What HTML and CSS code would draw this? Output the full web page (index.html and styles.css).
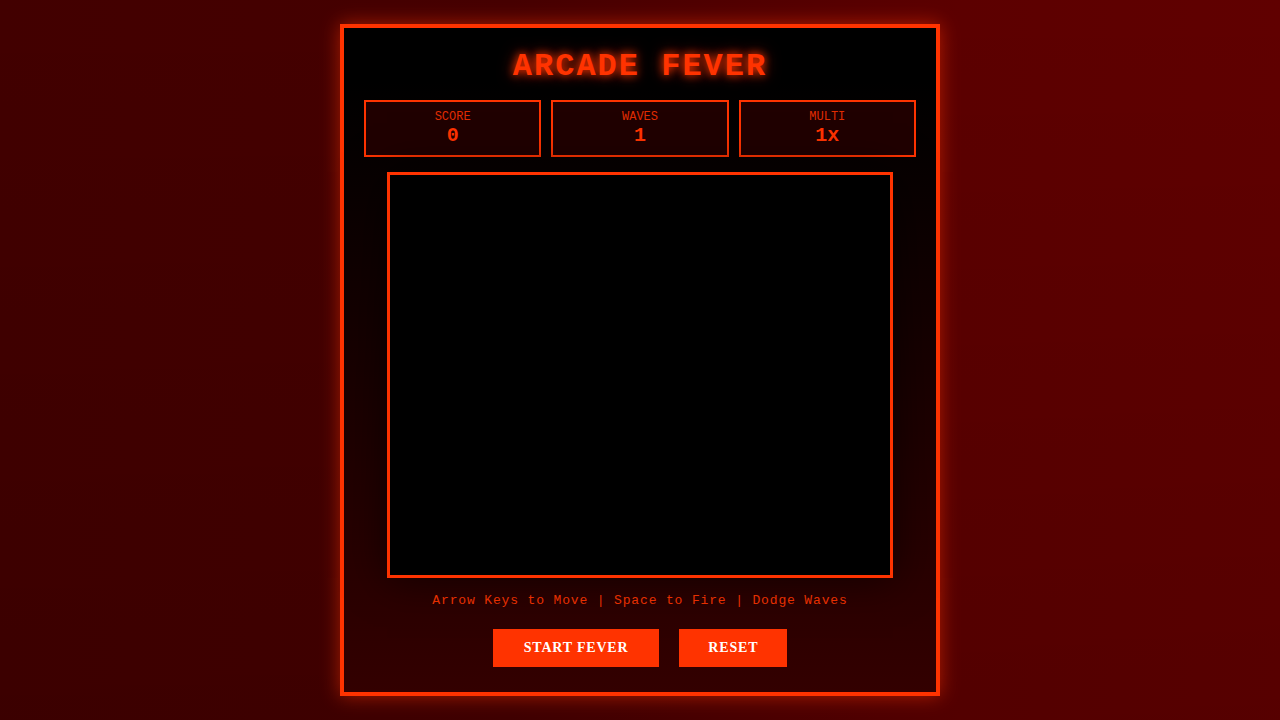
FILE: index.html
```html
<!DOCTYPE html>
<html lang="en">
<head>
<meta charset="utf-8">
<title>Arcade Fever</title>
<link rel="stylesheet" href="styles.css">
</head>
<body>
<div class="cabinet">
  <h1 class="title">ARCADE FEVER</h1>
  <div class="stats">
    <div class="stat"><div class="stat-label">SCORE</div><div class="stat-value">0</div></div>
    <div class="stat"><div class="stat-label">WAVES</div><div class="stat-value">1</div></div>
    <div class="stat"><div class="stat-label">MULTI</div><div class="stat-value">1x</div></div>
  </div>
  <div class="screen"></div>
  <p class="help">Arrow Keys to Move | Space to Fire | Dodge Waves</p>
  <div class="controls">
    <button class="btn btn-start">START FEVER</button>
    <button class="btn btn-reset">RESET</button>
  </div>
</div>
</body>
</html>
```

FILE: styles.css
```css
html, body {
  margin: 0;
  padding: 0;
  height: 100%;
}
body {
  background:
    linear-gradient(to bottom, rgba(0,0,0,0) 0%, rgba(0,0,0,0.1) 100%),
    linear-gradient(to right, #420000 0%, #460000 40%, #5c0000 75%, #600000 100%);
  display: flex;
  align-items: center;
  justify-content: center;
  font-family: "Liberation Mono", "Courier New", monospace;
  color: #ff3300;
}
.cabinet {
  width: 552px;
  height: 620px;
  padding: 20px 20px 24px;
  border: 4px solid #ff3300;
  background: linear-gradient(to bottom, #000 8%, #330000 100%);
  box-shadow: 0 0 18px rgba(255, 51, 0, 0.55);
  display: flex;
  flex-direction: column;
  align-items: center;
}
.title {
  margin: 0 0 14px;
  font-size: 32px;
  line-height: 38px;
  font-weight: bold;
  letter-spacing: 2px;
  color: #ff3300;
  text-shadow: 0 0 8px #ff3300, 0 0 16px rgba(255, 51, 0, 0.6);
}
.stats {
  width: 552px;
  display: grid;
  grid-template-columns: repeat(3, 1fr);
  gap: 10px;
}
.stat {
  border: 2px solid #ff3300;
  background: #200000;
  padding: 9px 0 7px;
  text-align: center;
}
.stat-label {
  font-size: 12px;
  line-height: 13px;
  color: #e02d00;
}
.stat-value {
  font-size: 20px;
  line-height: 24px;
  font-weight: bold;
  color: #ff3300;
}
.screen {
  margin-top: 15px;
  width: 500px;
  height: 400px;
  border: 3px solid #ff3300;
  background: #000;
  box-shadow: 0 0 40px rgba(0, 0, 0, 0.6);
}
.help {
  margin: 14px 0 0;
  font-size: 13px;
  line-height: 18px;
  letter-spacing: 0.85px;
  color: #e63000;
}
.controls {
  margin-top: 19px;
  display: flex;
  gap: 20px;
}
.btn {
  height: 38px;
  border: none;
  background: #ff3300;
  color: #fff;
  font-family: "Liberation Serif", "Times New Roman", serif;
  font-weight: bold;
  font-size: 14px;
  letter-spacing: 0.8px;
}
.btn-start {
  padding: 0 31px;
}
.btn-reset {
  padding: 0 29px;
}
```
